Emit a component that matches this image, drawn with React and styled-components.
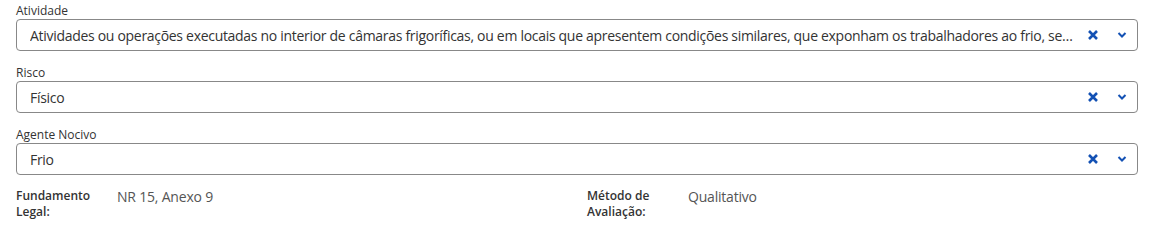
import React from "react";
import styled, { createGlobalStyle } from "styled-components";

const Global = createGlobalStyle`
  body { margin: 0; background: #fff; font-family: "Open Sans", "Lato", sans-serif; color: #333; }
`;

const Page = styled.div`
  padding: 3px 12px 0 16px;
  display: flex;
  flex-direction: column;
`;

const Field = styled.div`
  display: flex;
  flex-direction: column;
  margin-bottom: 14px;
`;

const Label = styled.label`
  font-size: 12px;
  font-weight: 500;
  color: #333;
  line-height: 16px;
`;

const Box = styled.div`
  height: 32px;
  box-sizing: border-box;
  border: 1px solid #888;
  border-radius: 4px;
  display: flex;
  align-items: center;
  padding: 0 10px 0 13px;
`;

const Value = styled.span`
  flex: 1;
  font-size: 14px;
  letter-spacing: -0.3px;
  color: #333;
  white-space: nowrap;
  overflow: hidden;
  text-overflow: ellipsis;
  min-width: 0;
`;

const Icons = styled.div`
  display: flex;
  align-items: center;
  gap: 18px;
  margin-left: 6px;
  color: #1351b4;
`;

const Info = styled.div`
  display: grid;
  grid-template-columns: 1fr 1fr;
  margin-top: -1px;
`;

const InfoItem = styled.div`
  display: grid;
  grid-template-columns: 101px 1fr;
  padding-left: ${(p) => p.$pad || 0}px;
`;

const InfoLabel = styled.div`
  font-size: 12px;
  font-weight: 600;
  line-height: 16px;
  color: #333;
`;

const InfoValue = styled.div`
  font-size: 14px;
  letter-spacing: -0.2px;
  color: #555;
  line-height: 16px;
  padding-top: 1px;
`;

const XIcon = () => (
  <svg width="12" height="12" viewBox="0 0 12 12">
    <path d="M2 2 L10 10 M10 2 L2 10" stroke="#1351b4" strokeWidth="2.6" strokeLinecap="butt" />
  </svg>
);

const Chevron = () => (
  <svg width="10" height="8" viewBox="0 0 10 8">
    <path d="M1.5 2 L5 5.5 L8.5 2" fill="none" stroke="#1351b4" strokeWidth="2" />
  </svg>
);

const Select = ({ label, value }) => (
  <Field>
    <Label>{label}</Label>
    <Box>
      <Value>{value}</Value>
      <Icons>
        <XIcon />
        <Chevron />
      </Icons>
    </Box>
  </Field>
);

export default function App() {
  return (
    <>
      <Global />
      <Page>
        <Select
          label="Atividade"
          value="Atividades ou operações executadas no interior de câmaras frigoríficas, ou em locais que apresentem condições similares, que exponham os trabalhadores ao frio, sem a proteção adequada"
        />
        <Select label="Risco" value="Físico" />
        <Select label="Agente Nocivo" value="Frio" />
        <Info>
          <InfoItem>
            <InfoLabel>Fundamento<br />Legal:</InfoLabel>
            <InfoValue>NR 15, Anexo 9</InfoValue>
          </InfoItem>
          <InfoItem $pad={10}>
            <InfoLabel>Método de<br />Avaliação:</InfoLabel>
            <InfoValue>Qualitativo</InfoValue>
          </InfoItem>
        </Info>
      </Page>
    </>
  );
}
